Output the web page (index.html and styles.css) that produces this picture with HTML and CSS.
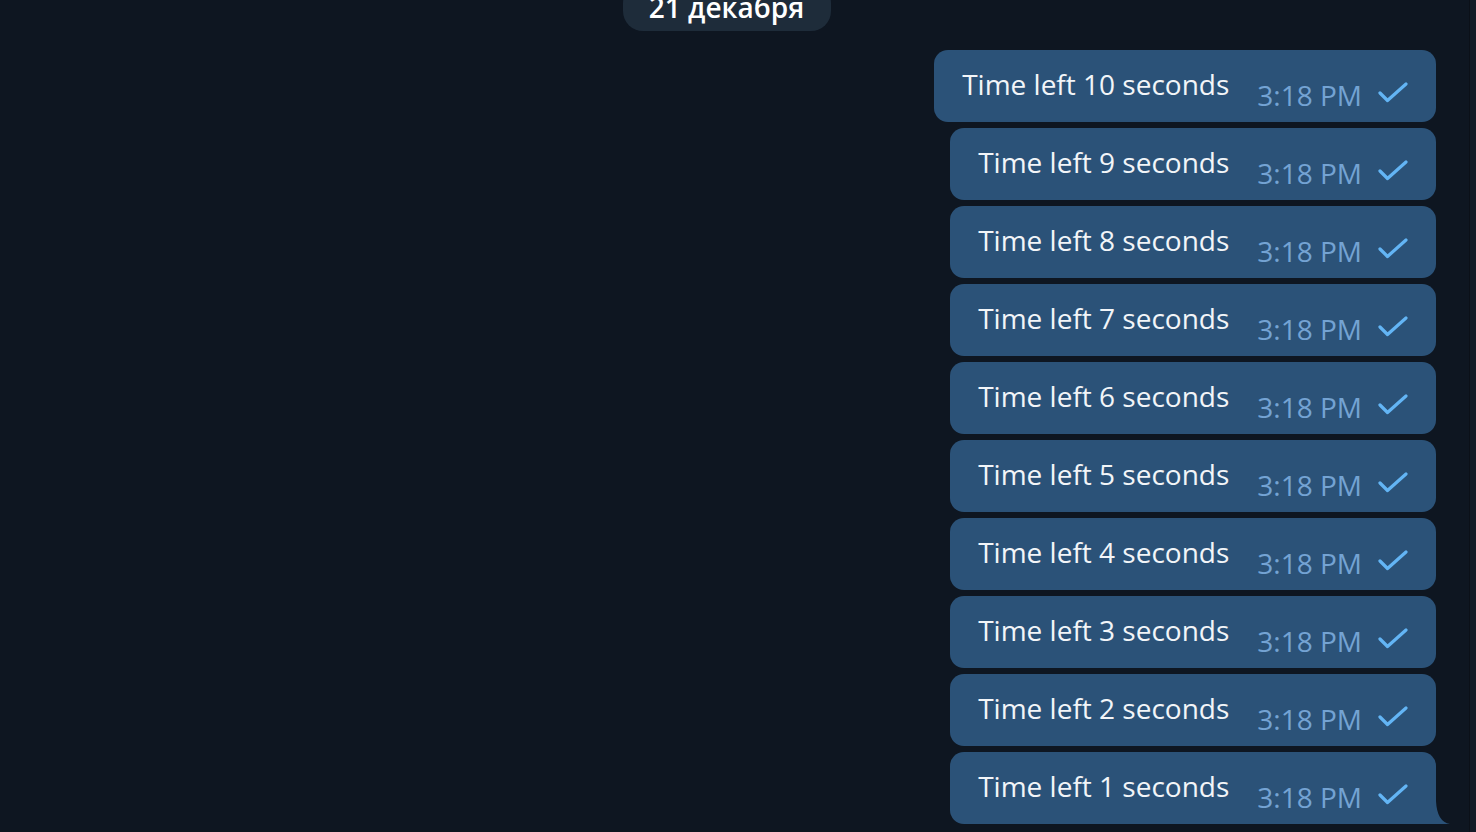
FILE: index.html
```html
<!DOCTYPE html>
<html>
<head>
<meta charset="utf-8">
<link rel="stylesheet" href="styles.css">
</head>
<body>
<div class="app">
  <div class="chat">
    <div class="date"><span class="date-text">21 декабря</span></div>
    <div class="messages">
      <div class="bubble"><span class="text">Time left 10 seconds</span><span class="meta"><span class="time">3:18 PM</span><svg class="check" viewBox="0 0 30 22"><path d="M2 11 L9.5 18.5 L28 2"/></svg></span></div>
      <div class="bubble"><span class="text">Time left 9 seconds</span><span class="meta"><span class="time">3:18 PM</span><svg class="check" viewBox="0 0 30 22"><path d="M2 11 L9.5 18.5 L28 2"/></svg></span></div>
      <div class="bubble"><span class="text">Time left 8 seconds</span><span class="meta"><span class="time">3:18 PM</span><svg class="check" viewBox="0 0 30 22"><path d="M2 11 L9.5 18.5 L28 2"/></svg></span></div>
      <div class="bubble"><span class="text">Time left 7 seconds</span><span class="meta"><span class="time">3:18 PM</span><svg class="check" viewBox="0 0 30 22"><path d="M2 11 L9.5 18.5 L28 2"/></svg></span></div>
      <div class="bubble"><span class="text">Time left 6 seconds</span><span class="meta"><span class="time">3:18 PM</span><svg class="check" viewBox="0 0 30 22"><path d="M2 11 L9.5 18.5 L28 2"/></svg></span></div>
      <div class="bubble"><span class="text">Time left 5 seconds</span><span class="meta"><span class="time">3:18 PM</span><svg class="check" viewBox="0 0 30 22"><path d="M2 11 L9.5 18.5 L28 2"/></svg></span></div>
      <div class="bubble"><span class="text">Time left 4 seconds</span><span class="meta"><span class="time">3:18 PM</span><svg class="check" viewBox="0 0 30 22"><path d="M2 11 L9.5 18.5 L28 2"/></svg></span></div>
      <div class="bubble"><span class="text">Time left 3 seconds</span><span class="meta"><span class="time">3:18 PM</span><svg class="check" viewBox="0 0 30 22"><path d="M2 11 L9.5 18.5 L28 2"/></svg></span></div>
      <div class="bubble"><span class="text">Time left 2 seconds</span><span class="meta"><span class="time">3:18 PM</span><svg class="check" viewBox="0 0 30 22"><path d="M2 11 L9.5 18.5 L28 2"/></svg></span></div>
      <div class="bubble last"><span class="text">Time left 1 seconds</span><span class="meta"><span class="time">3:18 PM</span><svg class="check" viewBox="0 0 30 22"><path d="M2 11 L9.5 18.5 L28 2"/></svg></span><svg class="tail" viewBox="0 0 14 23"><path d="M0 0 Q1 21 14 23 L0 23 Z"/></svg></div>
    </div>
  </div>
  <div class="strip"></div>
</div>
</body>
</html>
```
FILE: styles.css
```css
html, body {
  margin: 0;
  padding: 0;
  height: 100%;
  overflow: hidden;
  background: #0e1621;
}
.app {
  display: flex;
  height: 832px;
  font-family: "Open Sans", "Noto Sans", sans-serif;
}
.chat {
  flex: 1;
  display: flex;
  flex-direction: column;
  padding-right: 33px;
}
.date {
  display: flex;
  justify-content: center;
  margin-top: -17px;
  padding-left: 18px;
}
.date-text {
  background: #1e2c3a;
  color: #ffffff;
  font-weight: 600;
  font-size: 28px;
  line-height: 48px;
  padding: 0 27px 0 26px;
  border-radius: 20px;
}
.messages {
  margin-top: 19px;
  display: flex;
  flex-direction: column;
  align-items: flex-end;
  gap: 6px;
}
.bubble {
  position: relative;
  display: flex;
  align-items: flex-start;
  height: 72px;
  box-sizing: border-box;
  padding: 0 28px;
  background: #2b5278;
  border-radius: 14px;
}
.bubble.last {
  border-bottom-right-radius: 0;
}
.text {
  margin-top: 16px;
  font-size: 28px;
  line-height: 36px;
  color: #f2f5f8;
  white-space: nowrap;
}
.meta {
  display: flex;
  align-items: flex-start;
  margin-left: 28px;
}
.time {
  margin-top: 27px;
  font-size: 28px;
  line-height: 36px;
  color: #74a3d3;
  white-space: nowrap;
}
.check {
  width: 30px;
  height: 22px;
  margin-left: 16px;
  margin-top: 32px;
  fill: none;
  stroke: #63b5f5;
  stroke-width: 3.2;
  stroke-linecap: round;
  stroke-linejoin: round;
}
.tail {
  position: absolute;
  right: -14px;
  bottom: 0;
  width: 14px;
  height: 23px;
  fill: #2b5278;
}
.strip {
  width: 6px;
  background: #131b27;
  border-left: 1px solid #0b1018;
}
```
